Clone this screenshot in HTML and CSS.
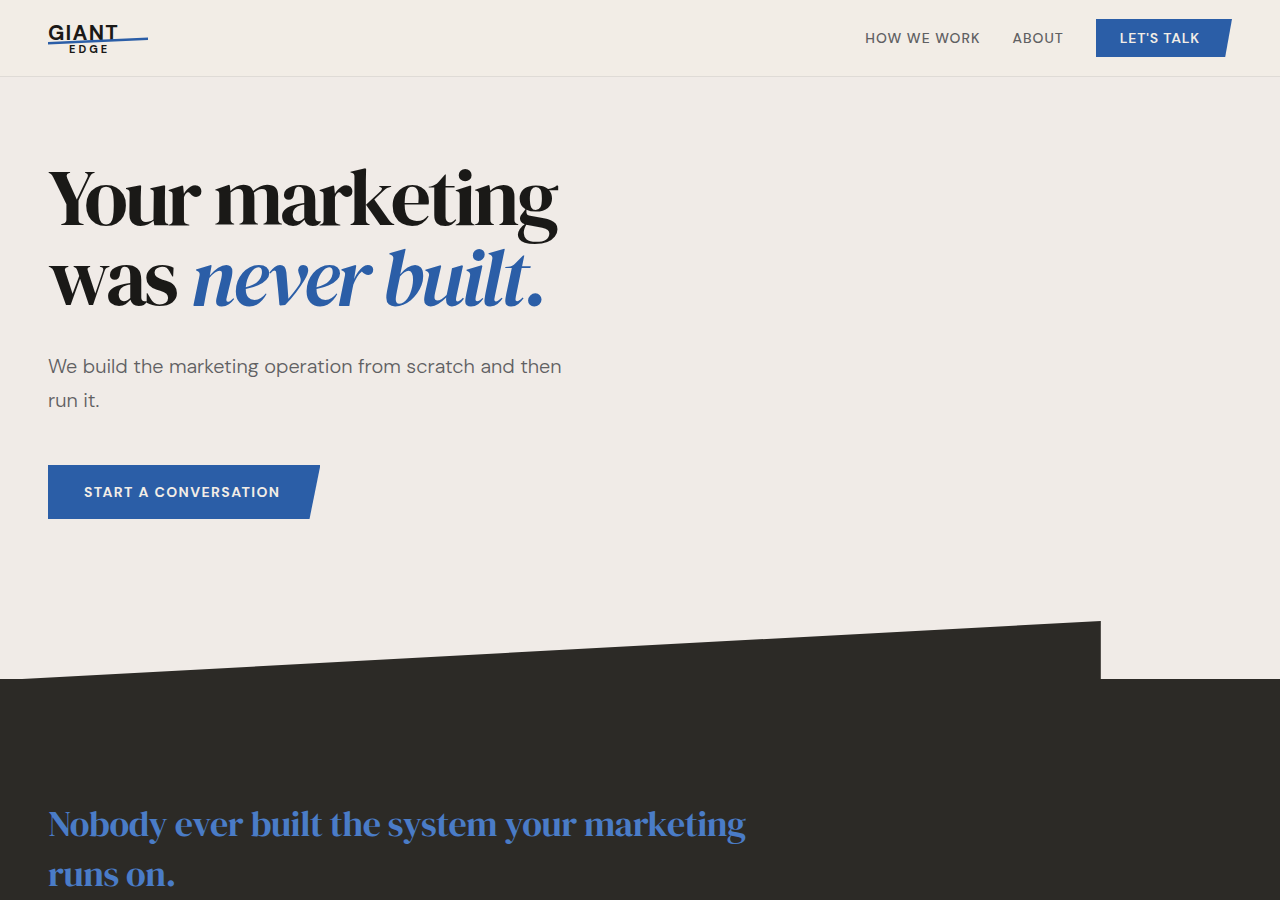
FILE: index.html
```
<!DOCTYPE html>
<html lang="en">
<head>
<meta charset="utf-8">
<meta name="viewport" content="width=device-width, initial-scale=1">
<title>Giant Edge</title>
<link rel="stylesheet" href="styles.css">
</head>
<body>
<header class="site-header">
  <a class="logo" href="#" aria-label="Giant Edge">
    <svg class="logo-mark" width="100" height="36" viewBox="0 0 100 36" aria-hidden="true">
      <text class="logo-giant" x="0" y="20">GIANT</text>
      <path d="M0 22 L100 17.5 V20 L0 24.5 Z" fill="#2b5ea7"/>
      <text class="logo-edge" x="21" y="33">EDGE</text>
    </svg>
  </a>
  <nav class="site-nav">
    <a class="nav-link" href="#how">How we work</a>
    <a class="nav-link" href="#about">About</a>
    <a class="button button-small" href="#talk">Let's talk</a>
  </nav>
</header>
<main>
  <section class="hero">
    <div class="hero-content">
      <h1 class="hero-title">Your marketing<br>was <em>never built.</em></h1>
      <p class="hero-text">We build the marketing operation from scratch and then run it.</p>
      <a class="button button-large" href="#talk">Start a conversation</a>
    </div>
    <div class="hero-wedge"></div>
  </section>
  <section class="problem">
    <h2 class="problem-title">Nobody ever built the system your marketing runs on.</h2>
  </section>
</main>
</body>
</html>
```
FILE: styles.css
```
* { box-sizing: border-box; }
body {
  margin: 0;
  background: #f0ebe7;
  color: #1a1917;
  font-family: "DM Sans", Inter, sans-serif;
}
a { text-decoration: none; }
.site-header {
  display: flex;
  align-items: center;
  justify-content: space-between;
  padding: 19px 48px;
  background: #f2ede6;
  border-bottom: 1px solid #dfdbd6;
}
.logo, .logo-mark { display: block; }
.logo-mark { overflow: visible; }
.logo-giant {
  font: 700 21px "DM Sans", Inter, sans-serif;
  letter-spacing: 0.06em;
  fill: #1a1917;
}
.logo-edge {
  font: 700 11px "DM Sans", Inter, sans-serif;
  letter-spacing: 3px;
  fill: #1a1917;
}
.site-nav { display: flex; align-items: center; gap: 32px; }
.nav-link {
  color: #5f6062;
  font-size: 14px;
  font-weight: 500;
  letter-spacing: 1px;
  text-transform: uppercase;
}
.button {
  display: inline-block;
  background: #2b5ea7;
  color: #f2ede6;
  font-size: 14px;
  font-weight: 600;
  line-height: 18px;
  text-transform: uppercase;
}
.button-small {
  padding: 10px 32px 10px 24px;
  letter-spacing: 0.06em;
  clip-path: polygon(0 0, 100% 0, 95% 100%, 0 100%);
}
.button-large {
  padding: 18px 40px 18px 36px;
  font-weight: 700;
  letter-spacing: 0.1em;
  clip-path: polygon(0 0, 100% 0, 96% 100%, 0 100%);
}
.hero-content { padding: 80px 48px 102px; }
.hero-title {
  margin: 0 0 32px;
  font-family: "DM Serif Display", "Liberation Serif", serif;
  font-size: 80px;
  font-weight: 400;
  line-height: 80px;
  letter-spacing: -3px;
}
.hero-title em { color: #2b5ea7; }
.hero-text {
  max-width: 540px;
  margin: 0 0 48px;
  color: #5f6062;
  font-size: 20px;
  font-weight: 300;
  line-height: 34px;
}
.hero-wedge {
  width: 86%;
  height: 58px;
  background: #2c2a26;
  clip-path: polygon(2% 100%, 100% 0, 100% 100%);
}
.problem {
  padding: 120px 48px;
  background: #2c2a26;
}
.problem-title {
  max-width: 720px;
  margin: 0;
  color: #4a7cc7;
  font-family: "DM Serif Display", "Liberation Serif", serif;
  font-size: 36px;
  font-weight: 400;
  line-height: 1.4;
  letter-spacing: -0.014em;
}
```
